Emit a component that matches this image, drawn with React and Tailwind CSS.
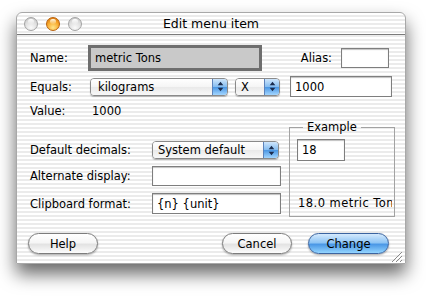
import React from "react";

function Arrows() {
  return (
    <svg width="7" height="11" viewBox="0 0 7 11">
      <path d="M3.5 0.8 L6.3 4.2 L0.7 4.2 Z M0.7 6.8 L6.3 6.8 L3.5 10.2 Z" fill="#1b2b4d" />
    </svg>
  );
}

function Popup({ className, padClass, children }) {
  return (
    <div className={"flex shrink-0 items-stretch overflow-hidden rounded-[4px] border border-[#8a8a8a] shadow-[0_1px_1px_rgba(0,0,0,0.25)] " + className}>
      <div className={"flex flex-1 items-center bg-[linear-gradient(#ffffff,#f5f5f5_50%,#e9e9e9_50%,#f8f8f8)] " + padClass}>
        {children}
      </div>
      <div className="flex w-[15px] items-center justify-center border-l border-[#5d83bb] bg-[linear-gradient(#cfe6fc,#86bdf0_48%,#4b97e4_52%,#a3d6ff)]">
        <Arrows />
      </div>
    </div>
  );
}

function Field({ className, children }) {
  return (
    <div className={"flex shrink-0 items-center border border-[#7e7e7e] bg-white pl-[4px] shadow-[inset_0_1px_1px_rgba(0,0,0,0.25)] " + className}>
      {children}
    </div>
  );
}

function Light({ kind }) {
  if (kind === "orange") {
    return (
      <div className="relative h-[14px] w-[14px] rounded-full border border-[#b8620c] bg-[radial-gradient(circle_at_50%_80%,#ffe58a,#f7a629_55%,#d26a0a)]">
        <div className="absolute left-[3px] top-[1px] h-[5px] w-[6px] rounded-full bg-[linear-gradient(#fffbe8,rgba(255,255,255,0.1))]" />
      </div>
    );
  }
  return (
    <div className="relative h-[14px] w-[14px] rounded-full border border-[#a3a3a3] bg-[radial-gradient(circle_at_50%_80%,#fafafa,#dcdcdc_60%,#bdbdbd)]">
      <div className="absolute left-[3px] top-[1px] h-[5px] w-[6px] rounded-full bg-[linear-gradient(#ffffff,rgba(255,255,255,0.1))]" />
    </div>
  );
}

export default function App() {
  return (
    <div className="h-[298px] w-[426px] bg-white pl-[16px] pt-[12px] font-['DejaVu_Sans',sans-serif] text-[11.5px] leading-[14px] text-black">
      <div className="relative flex h-[252px] w-[390px] flex-col rounded-t-[6px] border border-[#a8a8a8] bg-[repeating-linear-gradient(to_bottom,#ffffff_0px,#ffffff_2px,#ebebeb_2px,#ebebeb_4px)] shadow-[0_10px_18px_rgba(0,0,0,0.6)]">
        {/* title bar */}
        <div className="grid h-[22px] shrink-0 grid-cols-[1fr_auto_1fr] items-center rounded-t-[6px] border-b border-[#7a7a7a]">
          <div className="flex items-center gap-[8px] pl-[7px]">
            <Light kind="gray" />
            <Light kind="orange" />
            <Light kind="gray" />
          </div>
          <div className="text-[12.5px]">Edit menu item</div>
          <div />
        </div>

        {/* content */}
        <div className="flex flex-1 flex-col pl-[13px] pr-[16px]">
          {/* Name row */}
          <div className="mt-[10px] flex h-[26px] items-center">
            <div className="w-[58px] shrink-0">Name:</div>
            <div className="flex h-[26px] w-[174px] shrink-0 items-center border-[3px] border-[#6e6e6e] bg-[#c9c9c9] pl-[4px]">
              metric Tons
            </div>
            <div className="ml-auto">Alias:</div>
            <Field className="ml-[9px] h-[20px] w-[48px]" />
          </div>

          {/* Equals row */}
          <div className="mt-[5px] flex h-[21px] items-center">
            <div className="w-[60px] shrink-0">Equals:</div>
            <Popup className="h-[18px] w-[138px]" padClass="pl-[7px]">kilograms</Popup>
            <Popup className="ml-[7px] h-[18px] w-[45px]" padClass="pl-[5px]">X</Popup>
            <Field className="ml-[10px] h-[21px] w-[102px]">1000</Field>
          </div>

          {/* Value row */}
          <div className="mt-[7px] flex h-[14px] items-center">
            <div className="w-[62px] shrink-0">Value:</div>
            <div>1000</div>
          </div>

          {/* lower section */}
          <div className="mt-[2px] flex">
            <div className="flex w-[251px] shrink-0 flex-col">
              <div className="mt-[21px] flex h-[18px] items-center">
                <div className="w-[122px] shrink-0">Default decimals:</div>
                <Popup className="h-[18px] w-[127px]" padClass="pl-[5px]">System default</Popup>
              </div>
              <div className="mt-[7px] flex h-[20px] items-center">
                <div className="w-[122px] shrink-0">Alternate display:</div>
                <Field className="h-[20px] w-[129px]" />
              </div>
              <div className="mt-[7px] flex h-[21px] items-center">
                <div className="w-[122px] shrink-0">Clipboard format:</div>
                <Field className="h-[21px] w-[129px] pl-[3px]">{"{n} {unit}"}</Field>
              </div>
            </div>
            <fieldset className="ml-[8px] h-[97px] w-[106px] shrink-0 border border-[#a2a2a2]">
              <legend className="ml-[13px] px-[4px] leading-[14px]">Example</legend>
              <Field className="ml-[7px] mt-[5px] h-[22px] w-[48px]">18</Field>
              <div className="ml-[8px] mt-[35px] w-[94px] overflow-hidden whitespace-nowrap tracking-[0.45px]">18.0 metric Tons</div>
            </fieldset>
          </div>

          {/* buttons */}
          <div className="mt-[16px] flex h-[21px] items-center">
            <div className="-ml-[2px] flex h-[21px] w-[70px] items-center justify-center rounded-full border border-[#7c7c7c] bg-[linear-gradient(#ffffff,#f6f6f6_45%,#e3e3e3_55%,#fcfcfc)] shadow-[0_1px_2px_rgba(0,0,0,0.35)]">
              Help
            </div>
            <div className="ml-auto flex h-[21px] w-[70px] items-center justify-center rounded-full border border-[#7c7c7c] bg-[linear-gradient(#ffffff,#f6f6f6_45%,#e3e3e3_55%,#fcfcfc)] shadow-[0_1px_2px_rgba(0,0,0,0.35)]">
              Cancel
            </div>
            <div className="ml-[16px] flex h-[21px] w-[81px] items-center justify-center rounded-full border border-[#3b64a0] bg-[linear-gradient(#d5eafd,#8fc5f5_45%,#4b98e6_55%,#94d5ff)] shadow-[0_1px_2px_rgba(0,0,0,0.35)]">
              Change
            </div>
          </div>
        </div>

        {/* resize grip */}
        <svg className="absolute bottom-[1px] right-[2px]" width="12" height="11" viewBox="0 0 12 11">
          <path d="M11 1 L1 11 M11 5 L5 11 M11 9 L9 11" stroke="#8a8a8a" strokeWidth="1" />
          <path d="M12 2 L2 12 M12 6 L6 12" stroke="#ffffff" strokeWidth="1" />
        </svg>
      </div>
    </div>
  );
}
